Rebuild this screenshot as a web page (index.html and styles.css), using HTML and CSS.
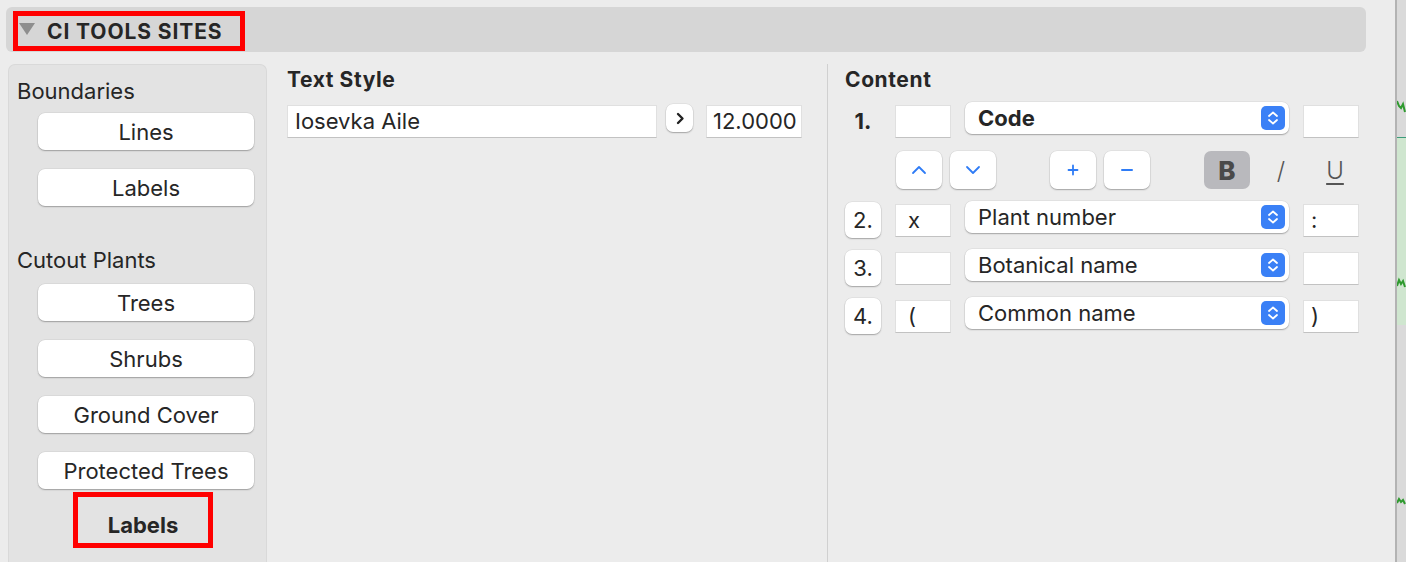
FILE: index.html
```html
<!DOCTYPE html>
<html lang="en">
  <head>
    <meta charset="UTF-8">
    <title>CI Tools Sites</title>
    <link rel="stylesheet" href="styles.css">
  </head>
  <body>
    <div class="app">
      <div class="main">
        <!-- Section header -->
        <div class="section-bar">
          <div class="section-title">
            <span class="disclosure"></span>
            <span>CI TOOLS SITES</span>
          </div>
        </div>

        <div class="columns">
          <!-- Left Panel -->
          <aside class="sidebar">
            <div class="group-title">Boundaries</div>
            <button class="btn side-btn first">Lines</button>
            <button class="btn side-btn">Labels</button>

            <div class="group-title spaced">Cutout Plants</div>
            <button class="btn side-btn first">Trees</button>
            <button class="btn side-btn">Shrubs</button>
            <button class="btn side-btn">Ground Cover</button>
            <button class="btn side-btn">Protected Trees</button>
            <div class="side-selected">Labels</div>
          </aside>

          <!-- Text Style -->
          <section class="text-style">
            <h2>Text Style</h2>
            <div class="style-row">
              <div class="field font-field">Iosevka Aile</div>
              <button class="btn arrow-btn">
                <svg width="10" height="13" viewBox="0 0 10 13"><path d="M3 2 L7.5 6.5 L3 11" fill="none" stroke="#222" stroke-width="2.4" stroke-linecap="round" stroke-linejoin="round"/></svg>
              </button>
              <div class="field size-field">12.0000</div>
            </div>
          </section>

          <!-- Content -->
          <section class="content">
            <h2>Content</h2>

            <div class="row first-row">
              <div class="num plain">1.</div>
              <div class="field cell"></div>
              <div class="popup bold">
                <span>Code</span>
                <svg class="stepper" width="24" height="24" viewBox="0 0 24 24"><rect width="24" height="24" rx="5" fill="#3a80f6"/><path d="M8 10 L12 6.5 L16 10 M8 14 L12 17.5 L16 14" fill="none" stroke="#fff" stroke-width="1.8" stroke-linecap="round" stroke-linejoin="round"/></svg>
              </div>
              <div class="field cell right"></div>
            </div>

            <div class="toolbar">
              <button class="btn tool">
                <svg width="16" height="10" viewBox="0 0 16 10"><path d="M2 8 L8 2 L14 8" fill="none" stroke="#2f7cf6" stroke-width="1.8" stroke-linecap="round" stroke-linejoin="round"/></svg>
              </button>
              <button class="btn tool">
                <svg width="16" height="10" viewBox="0 0 16 10"><path d="M2 2 L8 8 L14 2" fill="none" stroke="#2f7cf6" stroke-width="1.8" stroke-linecap="round" stroke-linejoin="round"/></svg>
              </button>
              <button class="btn tool spaced">
                <svg width="12" height="12" viewBox="0 0 12 12"><path d="M6 1.5 V10.5 M1.5 6 H10.5" fill="none" stroke="#2f7cf6" stroke-width="1.8" stroke-linecap="round"/></svg>
              </button>
              <button class="btn tool">
                <svg width="12" height="12" viewBox="0 0 12 12"><path d="M1 6 H11" fill="none" stroke="#2f7cf6" stroke-width="2" stroke-linecap="round"/></svg>
              </button>
              <button class="btn tool spaced active">B</button>
              <button class="tool flat italic">/</button>
              <button class="tool flat underline">U</button>
            </div>

            <div class="row second-row">
              <button class="btn num">2.</button>
              <div class="field cell">x</div>
              <div class="popup">
                <span>Plant number</span>
                <svg class="stepper" width="24" height="24" viewBox="0 0 24 24"><rect width="24" height="24" rx="5" fill="#3a80f6"/><path d="M8 10 L12 6.5 L16 10 M8 14 L12 17.5 L16 14" fill="none" stroke="#fff" stroke-width="1.8" stroke-linecap="round" stroke-linejoin="round"/></svg>
              </div>
              <div class="field cell right">:</div>
            </div>

            <div class="row">
              <button class="btn num">3.</button>
              <div class="field cell"></div>
              <div class="popup">
                <span>Botanical name</span>
                <svg class="stepper" width="24" height="24" viewBox="0 0 24 24"><rect width="24" height="24" rx="5" fill="#3a80f6"/><path d="M8 10 L12 6.5 L16 10 M8 14 L12 17.5 L16 14" fill="none" stroke="#fff" stroke-width="1.8" stroke-linecap="round" stroke-linejoin="round"/></svg>
              </div>
              <div class="field cell right"></div>
            </div>

            <div class="row">
              <button class="btn num">4.</button>
              <div class="field cell">(</div>
              <div class="popup">
                <span>Common name</span>
                <svg class="stepper" width="24" height="24" viewBox="0 0 24 24"><rect width="24" height="24" rx="5" fill="#3a80f6"/><path d="M8 10 L12 6.5 L16 10 M8 14 L12 17.5 L16 14" fill="none" stroke="#fff" stroke-width="1.8" stroke-linecap="round" stroke-linejoin="round"/></svg>
              </div>
              <div class="field cell right">)</div>
            </div>
          </section>
        </div>
      </div>

      <!-- Map behind the palette -->
      <div class="map">
        <svg width="9" height="562" viewBox="0 0 9 562">
          <rect x="0" y="138" width="9" height="187" fill="#cfe6cf"/>
          <line x1="0" y1="137.5" x2="9" y2="137.5" stroke="#3c9b7a" stroke-width="1"/>
          <path d="M0 101 L2 106 L4 108 L6 104 L8 112" fill="none" stroke="#2e9a2e" stroke-width="2"/>
          <path d="M0 286 L2 280 L4 284 L6 281 L8 287" fill="none" stroke="#2e9a2e" stroke-width="2"/>
          <path d="M0 503 L2 499 L4 502 L6 500 L8 504" fill="none" stroke="#2e9a2e" stroke-width="2"/>
        </svg>
      </div>
    </div>
  </body>
</html>
```

FILE: styles.css
```css
/* Reset */
* {
  margin: 0;
  padding: 0;
  box-sizing: border-box;
  font-family: Inter, "Noto Sans", sans-serif;
}

body {
  background-color: #ececec;
  color: #262626;
  font-size: 22px;
  overflow: hidden;
}

button {
  font-size: 22px;
  color: #262626;
  border: none;
  cursor: pointer;
}

.app {
  display: flex;
  height: 562px;
}

.main {
  width: 1396px;
  padding: 7px 0 0 6px;
  overflow: hidden;
}

.map {
  flex: 1;
  background-color: #dadada;
  border-left: 2px solid #b3b3b3;
}

.map svg {
  display: block;
}

/* Section header */
.section-bar {
  width: 1360px;
  height: 45px;
  background-color: #d6d6d6;
  border-radius: 6px;
  padding: 4px 0 0 7px;
}

.section-title {
  display: flex;
  align-items: center;
  width: 232px;
  height: 40px;
  border: 5px solid #ff0000;
  padding-left: 1px;
  font-size: 21px;
  font-weight: 700;
  letter-spacing: 0.9px;
}

.disclosure {
  width: 0;
  height: 0;
  border-left: 8px solid transparent;
  border-right: 8px solid transparent;
  border-top: 12px solid #8e8e8e;
  margin-right: 12px;
  margin-bottom: 4px;
}

.columns {
  display: flex;
  height: 500px;
  margin-top: 12px;
}

/* Shared controls */
.btn {
  background-color: #ffffff;
  border-radius: 7px;
  box-shadow: 0 0 0 0.5px rgba(0, 0, 0, 0.08), 0 1px 1.5px rgba(0, 0, 0, 0.28);
}

.field {
  background-color: #ffffff;
  height: 33px;
  border: 1px solid #e0e0e0;
  border-bottom-color: #c2c2c2;
  line-height: 31px;
  padding: 0 7px;
}

h2 {
  font-size: 21px;
  font-weight: 700;
  line-height: 24px;
  letter-spacing: 0.6px;
}

/* Left Panel */
.sidebar {
  width: 259px;
  margin-left: 2px;
  background-color: #e3e3e3;
  border: 1px solid #d9d9d9;
  border-bottom: none;
  border-radius: 7px 7px 0 0;
  padding: 14px 0 0 8px;
  display: flex;
  flex-direction: column;
  align-items: flex-start;
}

.group-title {
  line-height: 24px;
}

.group-title.spaced {
  margin-top: 42px;
}

.side-btn {
  width: 216px;
  height: 37px;
  margin-left: 21px;
  margin-top: 19px;
}

.side-btn.first {
  margin-top: 10px;
}

.sidebar .group-title.spaced + .side-btn {
  margin-top: 12px;
}

.side-selected {
  width: 140px;
  height: 56px;
  margin: 3px 0 0 56px;
  border: 5px solid #ff0000;
  padding-top: 10px;
  font-weight: 700;
  text-align: center;
  line-height: 36px;
}

/* Text Style */
.text-style {
  width: 560px;
  padding: 4px 0 0 20px;
}

.style-row {
  display: flex;
  align-items: flex-start;
  margin-top: 13px;
}

.font-field {
  width: 370px;
}

.arrow-btn {
  width: 27px;
  height: 28px;
  margin: -1px 0 0 9px;
  display: flex;
  align-items: center;
  justify-content: center;
}

.size-field {
  width: 96px;
  margin-left: 13px;
  padding-left: 6px;
}

/* Content */
.content {
  flex: 1;
  border-left: 1px solid #d0d0d0;
  padding: 4px 0 0 17px;
}

.row {
  display: flex;
  align-items: flex-start;
  height: 37px;
  margin-top: 11px;
}

.row.first-row {
  margin-top: 10px;
}

.row.second-row {
  margin-top: 12px;
}

.num {
  width: 36px;
  height: 36px;
  margin-top: 1px;
  text-align: center;
  line-height: 36px;
}

.num.plain {
  font-weight: 700;
}

.cell {
  width: 56px;
  margin: 3px 0 0 14px;
  padding-left: 12px;
}

.cell.right {
  padding-left: 7px;
}

.popup {
  width: 324px;
  height: 32px;
  margin-left: 14px;
  background-color: #ffffff;
  border-radius: 7px;
  box-shadow: 0 0 0 0.5px rgba(0, 0, 0, 0.08), 0 1px 1.5px rgba(0, 0, 0, 0.28);
  display: flex;
  align-items: center;
  justify-content: space-between;
  padding: 0 4px 0 13px;
}

.popup.bold {
  font-weight: 700;
}

.stepper {
  display: block;
}

.toolbar {
  display: flex;
  margin: 12px 0 0 51px;
}

.tool {
  width: 46px;
  height: 38px;
  margin-right: 8px;
  display: flex;
  align-items: center;
  justify-content: center;
}

.tool.spaced {
  margin-left: 46px;
}

.tool.active {
  background-color: #b9b9bd;
  box-shadow: none;
  color: #4a4a4a;
  font-size: 26px;
  font-weight: 800;
}

.tool.flat {
  background: none;
  color: #555555;
  font-size: 24px;
  font-weight: 300;
}

.tool.underline {
  text-decoration: underline;
  text-underline-offset: 4px;
  text-decoration-thickness: 1.5px;
}
```
